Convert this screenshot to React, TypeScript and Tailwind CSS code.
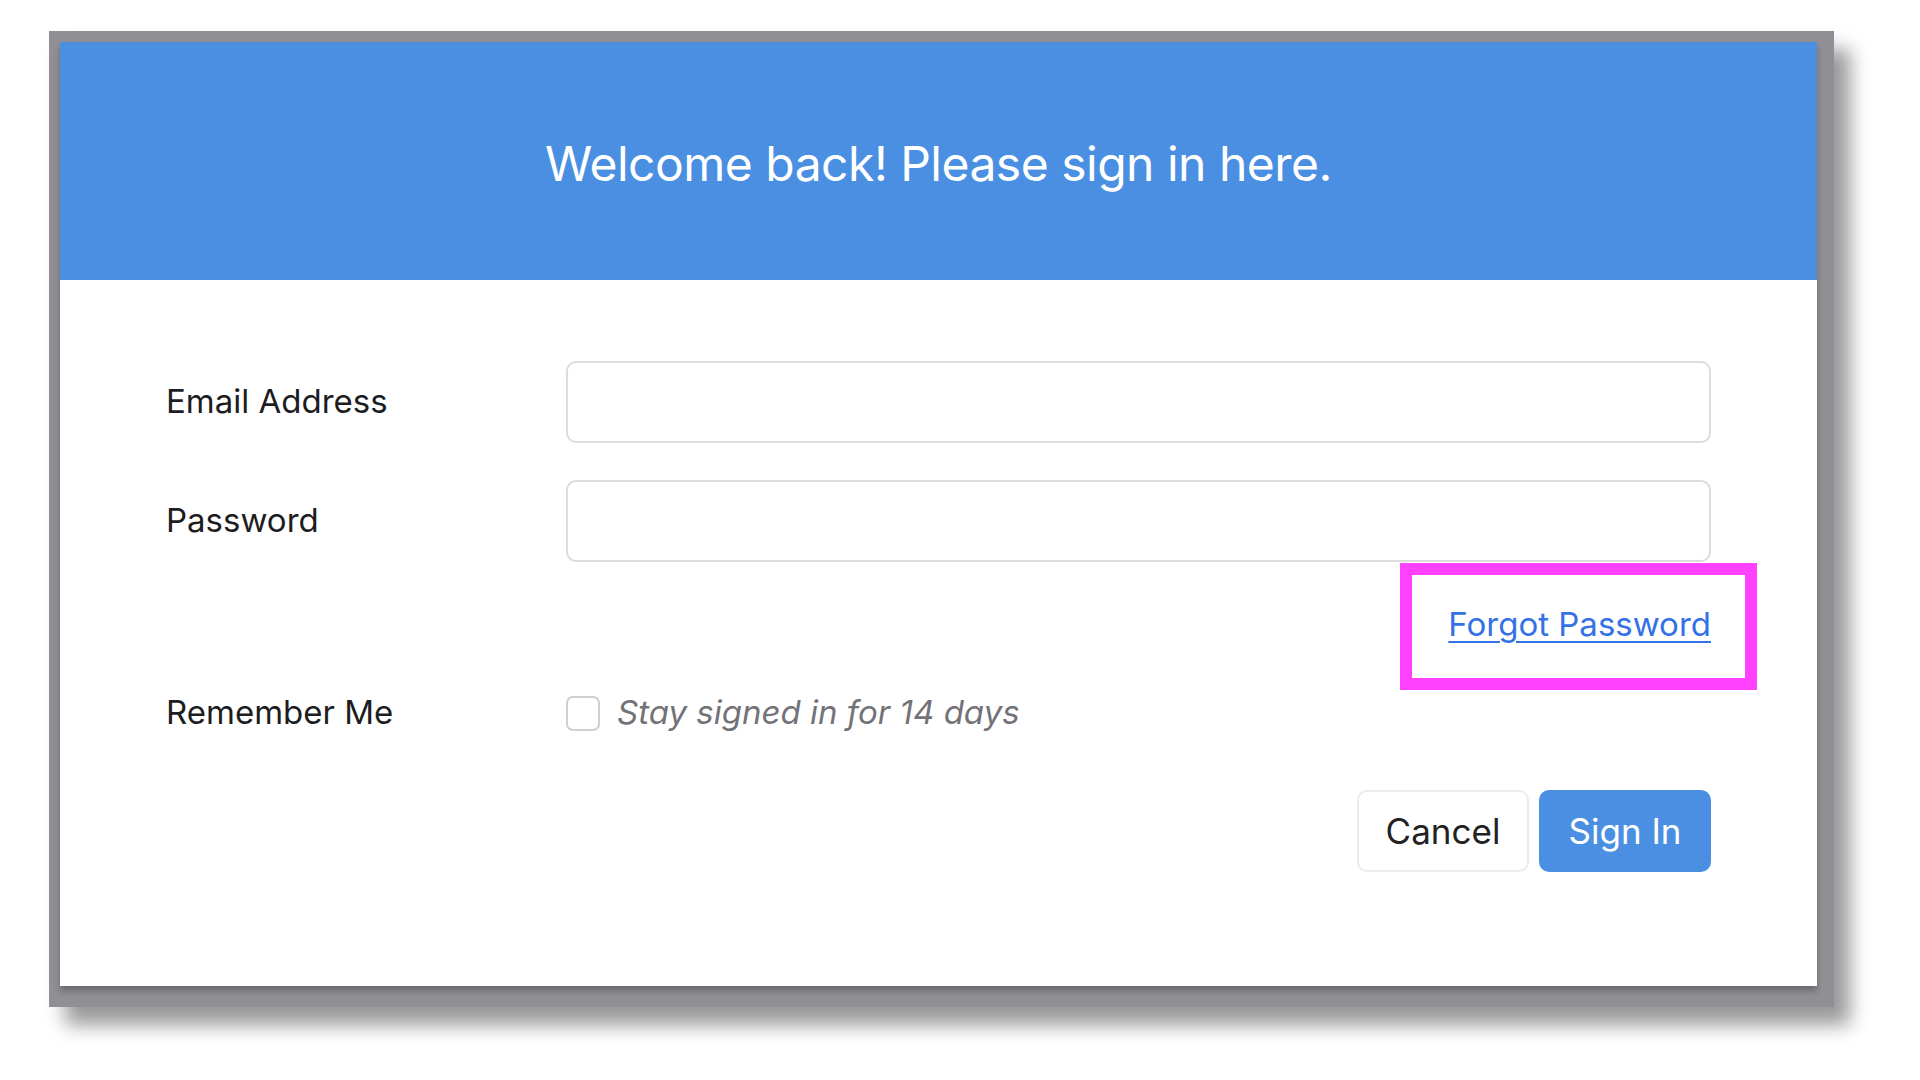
import { useState } from 'react'

export default function App() {
  const [remember, setRemember] = useState(false)

  return (
    <div className="w-full h-screen bg-white overflow-hidden font-['Inter','Liberation_Sans',sans-serif]">
      {/* screenshot frame */}
      <div className="ml-[49px] mt-[31px] w-[1785px] bg-[#8f8f94] pl-[11px] pt-[11px] pr-[17px] pb-[21px] shadow-[16px_18px_18px_rgba(0,0,0,0.4)]">
        <div className="bg-white shadow-[0_5px_6px_rgba(0,0,0,0.25)]">
          <div className="h-[238px] pt-[5px] bg-[#4a8fe1] flex items-center justify-center">
            <h1 className="text-white text-[48px] leading-none tracking-[-0.5px]">
              Welcome back! Please sign in here.
            </h1>
          </div>

          <div className="pt-[81px] px-[106px] pb-[114px] text-[33px] text-[#1d1d1f]">
            <div className="flex items-center">
              <label className="w-[400px]">Email Address</label>
              <input
                type="email"
                className="flex-1 h-[82px] rounded-[10px] border-2 border-[#dcdcde] px-5 outline-none"
              />
            </div>

            <div className="flex items-center mt-[37px]">
              <label className="w-[400px]">Password</label>
              <input
                type="password"
                className="flex-1 h-[82px] rounded-[10px] border-2 border-[#dcdcde] px-5 outline-none"
              />
            </div>

            <div className="flex justify-end mt-[42px]">
              <span className="relative inline-block">
                <a href="#" className="block leading-[40px] text-[#3571e6] underline underline-offset-[5px] decoration-2">
                  Forgot Password
                </a>
                <span className="absolute -left-[48px] -right-[46px] -top-[41px] -bottom-[46px] border-[12px] border-[#ff40fc] pointer-events-none" />
              </span>
            </div>

            <div className="flex items-center mt-[49px] h-[40px]">
              <label className="w-[400px]">Remember Me</label>
              <label className="flex items-center gap-[17px] cursor-pointer">
                <input
                  type="checkbox"
                  checked={remember}
                  onChange={e => setRemember(e.target.checked)}
                  className="appearance-none w-[34px] h-[35px] rounded-[7px] border-2 border-[#cfcfd2] bg-white checked:bg-[#4a8fe1]"
                />
                <span className="italic text-[#727277]">Stay signed in for 14 days</span>
              </label>
            </div>

            <div className="flex justify-end gap-[10px] mt-[57px]">
              <button className="h-[82px] w-[172px] rounded-[10px] border-2 border-[#ececee] bg-white text-[#222] text-[35px]">
                Cancel
              </button>
              <button className="h-[82px] w-[172px] rounded-[10px] bg-[#4a8fe1] text-white text-[35px]">
                Sign In
              </button>
            </div>
          </div>
        </div>
      </div>
    </div>
  )
}
